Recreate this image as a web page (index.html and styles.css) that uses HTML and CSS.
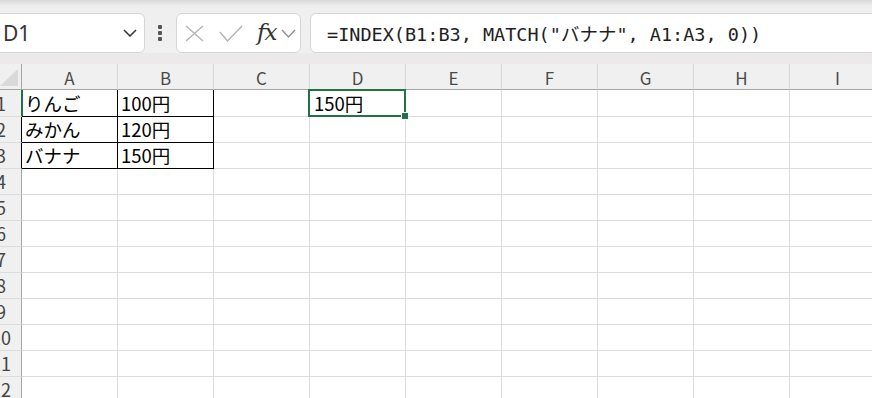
FILE: index.html
```html
<!DOCTYPE html>
<html lang="ja">
    <head>
        <meta charset="UTF-8" />
        <meta name="viewport" content="width=device-width, initial-scale=1.0" />
        <title>INDEX MATCH</title>
        <link rel="stylesheet" href="styles.css">
    </head>
    <body>
        <div class="toolbar">
            <div class="box name-box">
                <span class="name">D1</span>
                <svg class="chev" width="14" height="8" viewBox="0 0 14 8"><polyline points="1,1 7,7 13,1" fill="none" stroke="#3a3a3a" stroke-width="1.6" /></svg>
            </div>
            <div class="dots"><i></i><i></i><i></i></div>
            <div class="box fx-box">
                <svg width="19" height="17" viewBox="0 0 19 17"><path d="M1 1 L18 16 M18 1 L1 16" stroke="#b3b3b3" stroke-width="1.4" fill="none" /></svg>
                <svg class="ok" width="24" height="17" viewBox="0 0 24 17"><polyline points="1,7 8.5,16 23,1" fill="none" stroke="#b3b3b3" stroke-width="1.4" /></svg>
                <span class="fx">fx</span>
                <svg width="15" height="9" viewBox="0 0 15 9"><polyline points="1,1 7.5,8 14,1" fill="none" stroke="#8c8c8c" stroke-width="1.3" /></svg>
            </div>
            <div class="box formula">=INDEX(B1:B3, MATCH("バナナ", A1:A3, 0))</div>
        </div>
        <div class="band"></div>

        <div class="sheet">
            <div class="row head">
                <div class="rh corner"><span class="tri"></span></div>
                <div class="c">A</div><div class="c">B</div><div class="c">C</div><div class="c">D</div><div class="c">E</div><div class="c">F</div><div class="c">G</div><div class="c">H</div><div class="c">I</div>
            </div>
            <div class="row first">
                <div class="rh sel">1</div>
                <div class="c t">りんご</div><div class="c t">100円</div><div class="c"></div>
                <div class="c active">150円<span class="pick"></span><span class="handle"></span></div>
                <div class="c"></div><div class="c"></div><div class="c"></div><div class="c"></div><div class="c"></div>
            </div>
            <div class="row">
                <div class="rh dark">2</div>
                <div class="c t">みかん</div><div class="c t">120円</div><div class="c"></div><div class="c"></div><div class="c"></div><div class="c"></div><div class="c"></div><div class="c"></div><div class="c"></div>
            </div>
            <div class="row">
                <div class="rh dark">3</div>
                <div class="c t">バナナ</div><div class="c t">150円</div><div class="c"></div><div class="c"></div><div class="c"></div><div class="c"></div><div class="c"></div><div class="c"></div><div class="c"></div>
            </div>
            <div class="row">
                <div class="rh">4</div>
                <div class="c"></div><div class="c"></div><div class="c"></div><div class="c"></div><div class="c"></div><div class="c"></div><div class="c"></div><div class="c"></div><div class="c"></div>
            </div>
            <div class="row">
                <div class="rh">5</div>
                <div class="c"></div><div class="c"></div><div class="c"></div><div class="c"></div><div class="c"></div><div class="c"></div><div class="c"></div><div class="c"></div><div class="c"></div>
            </div>
            <div class="row">
                <div class="rh">6</div>
                <div class="c"></div><div class="c"></div><div class="c"></div><div class="c"></div><div class="c"></div><div class="c"></div><div class="c"></div><div class="c"></div><div class="c"></div>
            </div>
            <div class="row">
                <div class="rh">7</div>
                <div class="c"></div><div class="c"></div><div class="c"></div><div class="c"></div><div class="c"></div><div class="c"></div><div class="c"></div><div class="c"></div><div class="c"></div>
            </div>
            <div class="row">
                <div class="rh">8</div>
                <div class="c"></div><div class="c"></div><div class="c"></div><div class="c"></div><div class="c"></div><div class="c"></div><div class="c"></div><div class="c"></div><div class="c"></div>
            </div>
            <div class="row">
                <div class="rh">9</div>
                <div class="c"></div><div class="c"></div><div class="c"></div><div class="c"></div><div class="c"></div><div class="c"></div><div class="c"></div><div class="c"></div><div class="c"></div>
            </div>
            <div class="row">
                <div class="rh">10</div>
                <div class="c"></div><div class="c"></div><div class="c"></div><div class="c"></div><div class="c"></div><div class="c"></div><div class="c"></div><div class="c"></div><div class="c"></div>
            </div>
            <div class="row">
                <div class="rh">11</div>
                <div class="c"></div><div class="c"></div><div class="c"></div><div class="c"></div><div class="c"></div><div class="c"></div><div class="c"></div><div class="c"></div><div class="c"></div>
            </div>
            <div class="row">
                <div class="rh">12</div>
                <div class="c"></div><div class="c"></div><div class="c"></div><div class="c"></div><div class="c"></div><div class="c"></div><div class="c"></div><div class="c"></div><div class="c"></div>
            </div>
        </div>
    </body>
</html>
```

FILE: styles.css
```css
* {
    box-sizing: border-box;
}
html,
body {
    margin: 0;
    height: 100%;
    overflow: hidden;
    background: #fff;
}

/* formula bar */
.toolbar {
    display: flex;
    align-items: center;
    height: 53px;
    padding-top: 13px;
    background: linear-gradient(#d9d9d9, #efefef 6px, #f0f0f0);
}
.box {
    display: flex;
    align-items: center;
    height: 40px;
    border: 1px solid #d5d5d5;
    border-radius: 6px;
    background-color: #fff;
}
.name-box {
    width: 157px;
    margin-left: -12px;
    padding: 0 7px 0 14px;
    justify-content: space-between;
}
.name {
    font-family: "Noto Sans", "Open Sans", sans-serif;
    font-size: 21px;
    color: #333;
}
.dots {
    display: flex;
    flex-direction: column;
    gap: 2px;
    margin: 0 14px 0 13px;
}
.dots i {
    display: block;
    width: 4px;
    height: 4px;
    border-radius: 1px;
    background-color: #555;
}
.fx-box {
    width: 125px;
    padding-left: 8px;
}
.fx-box .ok {
    margin-left: 15px;
}
.fx {
    margin: 0 5px 2px 14px;
    font-family: "DejaVu Serif", "Liberation Serif", serif;
    font-style: italic;
    font-size: 23px;
    color: #333;
    letter-spacing: -1px;
}
.formula {
    flex: 1;
    margin: 0 -10px 0 9px;
    padding-left: 16px;
    font-family: "DejaVu Sans Mono", "Noto Sans CJK JP", monospace;
    font-size: 18.5px;
    color: #1e1e1e;
}
.band {
    height: 11px;
    background-color: #ebe9e9;
}

/* grid */
.sheet {
    margin-left: -19px;
    font-family: "Noto Sans CJK JP", sans-serif;
}
.row {
    display: flex;
    height: 26px;
}
.row.first {
    height: 27px;
}
.c,
.rh {
    flex: none;
    display: flex;
    align-items: flex-end;
    height: 100%;
    border-right: 1px solid #dcdcdc;
    border-bottom: 1px solid #dcdcdc;
    font-size: 18px;
    line-height: 1;
    color: #000;
}
.c {
    position: relative;
    width: 96px;
    padding: 0 0 4px 3px;
    font-size: 18.5px;
}
.rh {
    width: 41px;
    justify-content: center;
    padding-bottom: 4px;
    border-right-color: #a6a6a6;
    background-color: #f0f0f0;
    color: #444;
}
.head .c {
    justify-content: center;
    padding: 0 0 3px;
    border-right-color: #d6d6d6;
    border-bottom-color: #a6a6a6;
    background-color: #f0f0f0;
    color: #4a4a4a;
    font-size: 17px;
}
.corner {
    position: relative;
    border-bottom-color: #a6a6a6;
}
.tri {
    position: absolute;
    right: 3px;
    bottom: 3px;
    width: 0;
    height: 0;
    border-left: 18px solid transparent;
    border-bottom: 17px solid #d9d9d9;
}
.rh.sel {
    border-right: 2px solid #217346;
    width: 42px;
    margin-right: -1px;
}
.rh.dark {
    border-right-color: #000;
}
.c.t {
    border-right-color: #000;
    border-bottom-color: #000;
}
.active {
    z-index: 1;
    padding-left: 4px;
}
.pick {
    position: absolute;
    top: -1px;
    left: -2px;
    right: -1px;
    bottom: -1px;
    border: 2px solid #217346;
}
.handle {
    position: absolute;
    right: -4px;
    bottom: -4px;
    width: 8px;
    height: 8px;
    border: 1px solid #fff;
    background-color: #217346;
}
```
